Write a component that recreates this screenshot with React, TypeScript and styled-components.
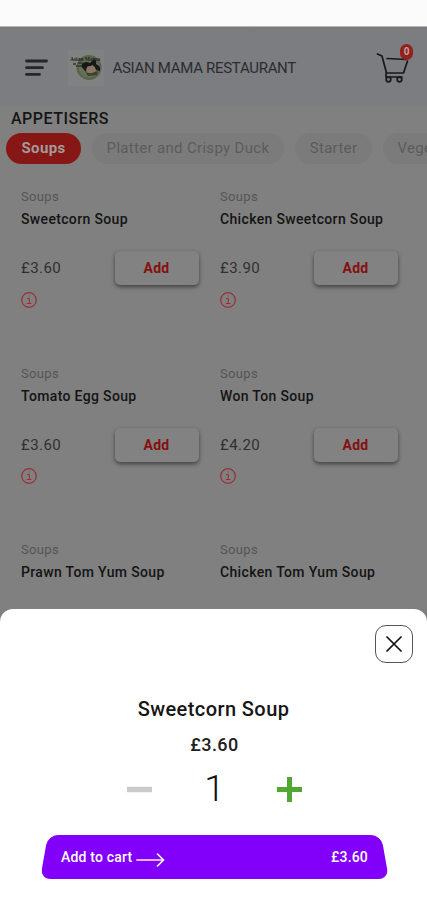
import React from "react";
import styled, { createGlobalStyle, css } from "styled-components";

const GlobalStyle = createGlobalStyle`
  * { box-sizing: border-box; }
  body { margin: 0; background: #808080; font-family: Roboto, "Liberation Sans", sans-serif; }
  button { font: inherit; border: 0; padding: 0; background: none; }
`;

const Screen = styled.div`
  position: relative;
  width: 427px;
  height: 900px;
  overflow: hidden;
  background: #808080;
`;

const StatusBar = styled.div`
  height: 27px;
  background: #fbfbfb;
  border-bottom: 1px solid #b4b4b4;
`;

const Header = styled.header`
  height: 81px;
  display: flex;
  align-items: center;
  padding: 0 14px 0 24px;
  background: linear-gradient(#7a7b7d 0, #7b7d80 8px, #7b7d80 78px, #7e8082 100%);
`;

const MenuButton = styled.button`
  width: 24px;
  height: 20px;
  margin-right: 20px;
  svg { display: block; }
`;

const Logo = styled.div`
  width: 36px;
  height: 36px;
  background: #808181;
  margin-right: 8.5px;
  svg { display: block; }
`;

const Brand = styled.h1`
  flex: 1;
  margin: 0;
  font-size: 15px;
  line-height: 20px;
  font-weight: 400;
  letter-spacing: -0.3px;
  color: #2b2c2f;
  white-space: nowrap;
`;

const Cart = styled.button`
  position: relative;
  width: 37px;
  height: 38px;
  svg { display: block; }
`;

const CartCount = styled.span`
  position: absolute;
  top: -5px;
  right: 0;
  width: 13px;
  height: 16px;
  border-radius: 7px;
  background: #94201b;
  color: #b9a5a4;
  font-size: 10px;
  font-weight: 700;
  line-height: 16px;
  text-align: center;
`;

const SectionTitle = styled.h2`
  margin: 0;
  padding-left: 11px;
  height: 25px;
  font-size: 16px;
  line-height: 21px;
  font-weight: 500;
  letter-spacing: 0.5px;
  color: #151515;
`;

const Tabs = styled.nav`
  display: flex;
  gap: 11px;
  padding-left: 6px;
  height: 31px;
  overflow: hidden;
`;

const Tab = styled.button<{ $active?: boolean; $width: number }>`
  flex: 0 0 ${(p) => p.$width}px;
  height: 31px;
  border-radius: 16px;
  font-size: 15px;
  line-height: 31px;
  letter-spacing: 0.32px;
  white-space: nowrap;
  background: #7b7b7b;
  color: #5b5b5b;
  ${(p) =>
    p.$active &&
    css`
      background: #861714;
      color: #a39b9a;
      font-weight: 700;
    `}
`;

const Menu = styled.main`
  display: grid;
  grid-template-columns: 199px 199px;
  grid-auto-rows: 176.5px;
  height: 445px;
  overflow: hidden;
  padding: 24px 0 0 21px;
`;

const Item = styled.article`
  width: 177.5px;
`;

const Category = styled.div`
  font-size: 13px;
  line-height: 17px;
  letter-spacing: 0.35px;
  color: #555;
`;

const ItemName = styled.h3`
  margin: 5px 0 0;
  font-size: 14px;
  line-height: 18px;
  font-weight: 500;
  letter-spacing: 0.34px;
  color: #141414;
  white-space: nowrap;
`;

const PriceRow = styled.div`
  display: flex;
  justify-content: space-between;
  align-items: center;
  margin-top: 22.5px;
  height: 35px;
`;

const Price = styled.span`
  font-size: 15px;
  letter-spacing: 0.45px;
  color: #303030;
`;

const AddButton = styled.button`
  width: 84px;
  height: 34px;
  border-radius: 5px;
  background: #828282;
  box-shadow: 0 2px 4px rgba(0, 0, 0, 0.5);
  color: #84110f;
  font-size: 14px;
  font-weight: 700;
  letter-spacing: 0.2px;
`;

const Info = styled.button`
  display: block;
  margin-top: 5px;
  svg { display: block; }
`;

const Sheet = styled.section`
  position: absolute;
  left: 0;
  right: 0;
  top: 609px;
  bottom: 0;
  display: flex;
  flex-direction: column;
  border-radius: 13px 13px 0 0;
  background: #fff;
`;

const CloseButton = styled.button`
  align-self: flex-end;
  width: 38px;
  height: 38px;
  margin: 16px 14px 0 0;
  display: grid;
  place-items: center;
  border: 1px solid #555;
  border-radius: 11px;
`;

const SheetTitle = styled.h2`
  margin: 34px 0 0;
  font-size: 20px;
  line-height: 25px;
  font-weight: 500;
  letter-spacing: 0.42px;
  text-align: center;
  color: #161616;
`;

const SheetPrice = styled.div`
  margin-top: 12px;
  padding-left: 2px;
  font-size: 18px;
  line-height: 22px;
  font-weight: 500;
  letter-spacing: 0.4px;
  text-align: center;
  color: #202020;
`;

const Stepper = styled.div`
  display: flex;
  align-items: center;
  justify-content: space-between;
  width: 175px;
  height: 40px;
  margin: 13px 0 0 127px;
  svg { display: block; }
`;

const Quantity = styled.span`
  font-size: 37px;
  line-height: 40px;
  font-weight: 300;
  color: #111;
`;

const CartBar = styled.button`
  position: relative;
  isolation: isolate;
  display: flex;
  align-items: center;
  width: 347px;
  height: 44px;
  margin: 26px 0 0 41px;
  padding: 0 20px 0 20px;
  color: #fff;
  font-size: 14px;
  font-weight: 500;
  letter-spacing: 0.18px;
  &::before,
  &::after {
    content: "";
    position: absolute;
    z-index: -1;
    top: 0;
    bottom: 0;
    background: #8200fa;
  }
  &::before {
    left: 3px;
    right: 45%;
    border-radius: 10px 0 0 10px;
    transform: skewX(-10deg);
  }
  &::after {
    left: 45%;
    right: 3px;
    border-radius: 0 10px 10px 0;
    transform: skewX(10deg);
  }
  svg { margin: 5px auto 0 4px; }
`;

const dishes = [
  { name: "Sweetcorn Soup", price: "£3.60" },
  { name: "Chicken Sweetcorn Soup", price: "£3.90" },
  { name: "Tomato Egg Soup", price: "£3.60" },
  { name: "Won Ton Soup", price: "£4.20" },
  { name: "Prawn Tom Yum Soup" },
  { name: "Chicken Tom Yum Soup" },
];

const LogoMark = () => (
  <svg width="36" height="36" viewBox="0 0 36 36">
    <circle cx="21" cy="17.5" r="12.5" fill="#59644b" />
    <circle cx="21" cy="17.5" r="10.3" fill="#667057" />
    <path d="M13 16Q16 10 22 13L26 9Q29 10 28 14Q33 16 32 21L28 20L25 15L19 17L18 22Z" fill="#171918" />
    <ellipse cx="23" cy="19.5" rx="4.6" ry="3.4" fill="#8e7465" />
    <path d="M16 20Q18 24 24 23L30 21L29 25L20 26Z" fill="#39412f" />
    <text x="2" y="11" fontFamily="Liberation Serif" fontSize="5.5" fontWeight="700" fill="#202320">Asian Mama</text>
    <path d="M5 14h3M10 13h5M8 16h5" stroke="#303631" strokeWidth="1.3" />
  </svg>
);

export default function App() {
  return (
    <Screen>
      <GlobalStyle />
      <StatusBar />
      <Header>
        <MenuButton aria-label="Menu">
          <svg width="24" height="20" viewBox="0 0 24 20" stroke="#25252a" strokeWidth="2.8" strokeLinecap="round">
            <path d="M2.5 3h20M2.5 9.7h16M2.5 16.4h13" />
          </svg>
        </MenuButton>
        <Logo><LogoMark /></Logo>
        <Brand>ASIAN MAMA RESTAURANT</Brand>
        <Cart aria-label="Cart">
          <svg width="37" height="38" viewBox="0 0 37 38" fill="none" stroke="#17191a" strokeWidth="1.7" strokeLinecap="round" strokeLinejoin="round">
            <path d="M1.5 5l4.5 2 4.5 17h17l4-12M11 9.5l19 1M10 24v4h16" />
            <circle cx="12.5" cy="30.5" r="2.3" />
            <circle cx="23.5" cy="30.5" r="2.3" />
          </svg>
          <CartCount>0</CartCount>
        </Cart>
      </Header>
      <SectionTitle>APPETISERS</SectionTitle>
      <Tabs>
        <Tab $active $width={75}>Soups</Tab>
        <Tab $width={192}>Platter and Crispy Duck</Tab>
        <Tab $width={77}>Starter</Tab>
        <Tab $width={104}>Vegetarian</Tab>
      </Tabs>
      <Menu>
        {dishes.map((dish) => (
          <Item key={dish.name}>
            <Category>Soups</Category>
            <ItemName>{dish.name}</ItemName>
            {dish.price && (
              <>
                <PriceRow>
                  <Price>{dish.price}</Price>
                  <AddButton>Add</AddButton>
                </PriceRow>
                <Info aria-label="Dish information">
                  <svg width="16" height="18" viewBox="0 0 16 18" fill="none" stroke="#982f32">
                    <circle cx="8" cy="9" r="7.3" strokeWidth="1.2" />
                    <path d="M6 7.5h2.3v5M5.8 12.5h4.6M7.6 5h1" />
                  </svg>
                </Info>
              </>
            )}
          </Item>
        ))}
      </Menu>
      <Sheet>
        <CloseButton aria-label="Close">
          <svg width="16" height="16" viewBox="0 0 16 16" stroke="#111" strokeWidth="1.7" strokeLinecap="round">
            <path d="M1 1l14 14M15 1L1 15" />
          </svg>
        </CloseButton>
        <SheetTitle>Sweetcorn Soup</SheetTitle>
        <SheetPrice>£3.60</SheetPrice>
        <Stepper>
          <svg width="25" height="25" viewBox="0 0 25 25"><path d="M0 12.5h25" stroke="#c9cacb" strokeWidth="5.5" /></svg>
          <Quantity>1</Quantity>
          <svg width="25" height="25" viewBox="0 0 25 25"><path d="M0 12.5h25M12.5 0v25" stroke="#50a832" strokeWidth="5" /></svg>
        </Stepper>
        <CartBar>
          <span>Add to cart</span>
          <svg width="29" height="14" viewBox="0 0 29 14" fill="none" stroke="#fff" strokeLinecap="round">
            <path d="M1 7h26" stroke="#dcb4ff" strokeWidth="2" />
            <path d="M21.5 1l6 6-6 6" strokeWidth="1.6" />
          </svg>
          <span>£3.60</span>
        </CartBar>
      </Sheet>
    </Screen>
  );
}
